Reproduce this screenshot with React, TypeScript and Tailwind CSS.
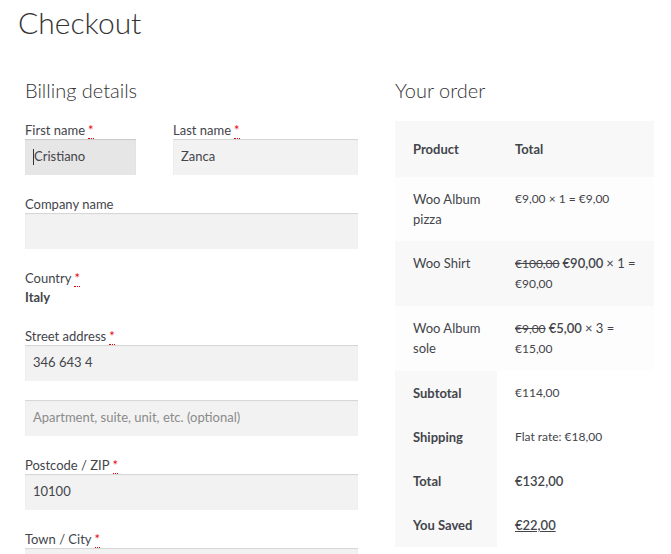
import React from 'react'

const Req = () => (
  <abbr className="ml-[3px] text-red-600 no-underline border-b border-dotted border-red-600 leading-none" title="required">
    *
  </abbr>
)

function Label({ text, required }: { text: string; required?: boolean }) {
  return (
    <label className="block h-[18px] leading-[18px] text-[13px] text-[#43454b]">
      {text}
      {required && <Req />}
    </label>
  )
}

function Input({ value, placeholder, focused }: { value?: string; placeholder?: string; focused?: boolean }) {
  return (
    <div
      className={`h-[36px] flex items-center px-2 text-[13px] shadow-[inset_0_1px_1px_rgba(0,0,0,0.125)] ${
        focused ? 'bg-[#e6e6e6]' : 'bg-[#f2f2f2]'
      }`}
    >
      {focused && <span className="w-px h-[16px] bg-[#333]" />}
      {value ? (
        <span className="text-[#43454b]">{value}</span>
      ) : (
        <span className="text-[#8a8a8a]">{placeholder}</span>
      )}
    </div>
  )
}

export default function App() {
  return (
    <div className="w-[671px] h-[554px] overflow-hidden bg-white font-['Lato',sans-serif] text-[#43454b]">
      <h1 className="pl-[18px] h-[44px] text-[30px] leading-[44px] font-light text-[#333]">Checkout</h1>
      <div className="flex pl-[25px] pt-[31px]">
        {/* Billing */}
        <div className="w-[333px]">
          <h3 className="h-[30px] text-[20px] leading-[30px] font-light text-[#333]">Billing details</h3>
          <div className="mt-[16px] flex gap-[37px]">
            <div className="w-[111px]">
              <Label text="First name" required />
              <Input value="Cristiano" focused />
            </div>
            <div className="flex-1">
              <Label text="Last name" required />
              <Input value="Zanca" />
            </div>
          </div>
          <div className="mt-[20px]">
            <Label text="Company name" />
            <Input />
          </div>
          <div className="mt-[20px]">
            <Label text="Country" required />
            <div className="h-[18px] leading-[18px] text-[13px] font-bold mt-[1px]">Italy</div>
          </div>
          <div className="mt-[21px]">
            <Label text="Street address" required />
            <Input value="346 643 4" />
            <div className="mt-[19px]">
              <Input placeholder="Apartment, suite, unit, etc. (optional)" />
            </div>
          </div>
          <div className="mt-[20px]">
            <Label text="Postcode / ZIP" required />
            <Input value="10100" />
          </div>
          <div className="mt-[20px]">
            <Label text="Town / City" required />
            <Input />
          </div>
        </div>

        {/* Order */}
        <div className="ml-[37px] w-[259px]">
          <h3 className="h-[30px] text-[20px] leading-[30px] font-light text-[#333]">Your order</h3>
          <table className="mt-[16px] w-full table-fixed border-collapse text-[13px] leading-[20px]">
            <colgroup>
              <col className="w-[102px]" />
              <col />
            </colgroup>
            <thead>
              <tr className="bg-[#f8f8f8]">
                <th className="text-left font-bold pl-[18px] pr-[10px] py-[18px]">Product</th>
                <th className="text-left font-bold px-[18px] py-[18px]">Total</th>
              </tr>
            </thead>
            <tbody>
              <tr className="bg-[#fdfdfd]">
                <td className="align-top pl-[18px] pr-[10px] py-[12px]">Woo Album pizza</td>
                <td className="align-top px-[18px] py-[12px] text-[12px]">€9,00 × 1 = €9,00</td>
              </tr>
              <tr className="bg-[#f8f8f8]">
                <td className="align-top pl-[18px] pr-[10px] py-[12px]">Woo Shirt</td>
                <td className="align-top px-[18px] py-[12px] text-[12px]">
                  <del>€100,00</del> <span className="text-[13px] font-semibold">€90,00</span>{' '}
                  <span className="text-[13px]">× 1 =</span> €90,00
                </td>
              </tr>
              <tr className="bg-[#fdfdfd]">
                <td className="align-top pl-[18px] pr-[10px] py-[12px]">Woo Album sole</td>
                <td className="align-top px-[18px] py-[12px] text-[12px]">
                  <del>€9,00</del> <span className="text-[13px] font-semibold">€5,00</span>{' '}
                  <span className="text-[13px]">× 3 =</span> €15,00
                </td>
              </tr>
            </tbody>
            <tfoot>
              <tr>
                <th className="bg-[#f8f8f8] text-left font-bold pl-[18px] pr-[10px] py-[12px]">Subtotal</th>
                <td className="bg-white px-[18px] py-[12px] text-[12px]">€114,00</td>
              </tr>
              <tr>
                <th className="bg-[#f8f8f8] text-left font-bold pl-[18px] pr-[10px] py-[12px]">Shipping</th>
                <td className="bg-white px-[18px] py-[12px] text-[12px]">Flat rate: €18,00</td>
              </tr>
              <tr>
                <th className="bg-[#f8f8f8] text-left font-bold pl-[18px] pr-[10px] py-[12px]">Total</th>
                <td className="bg-white px-[18px] py-[12px] font-semibold">€132,00</td>
              </tr>
              <tr>
                <th className="bg-[#f8f8f8] text-left font-bold pl-[18px] pr-[10px] py-[12px]">You Saved</th>
                <td className="bg-white px-[18px] py-[12px] font-semibold">
                  <span className="underline">€22,00</span>
                </td>
              </tr>
            </tfoot>
          </table>
        </div>
      </div>
    </div>
  )
}
